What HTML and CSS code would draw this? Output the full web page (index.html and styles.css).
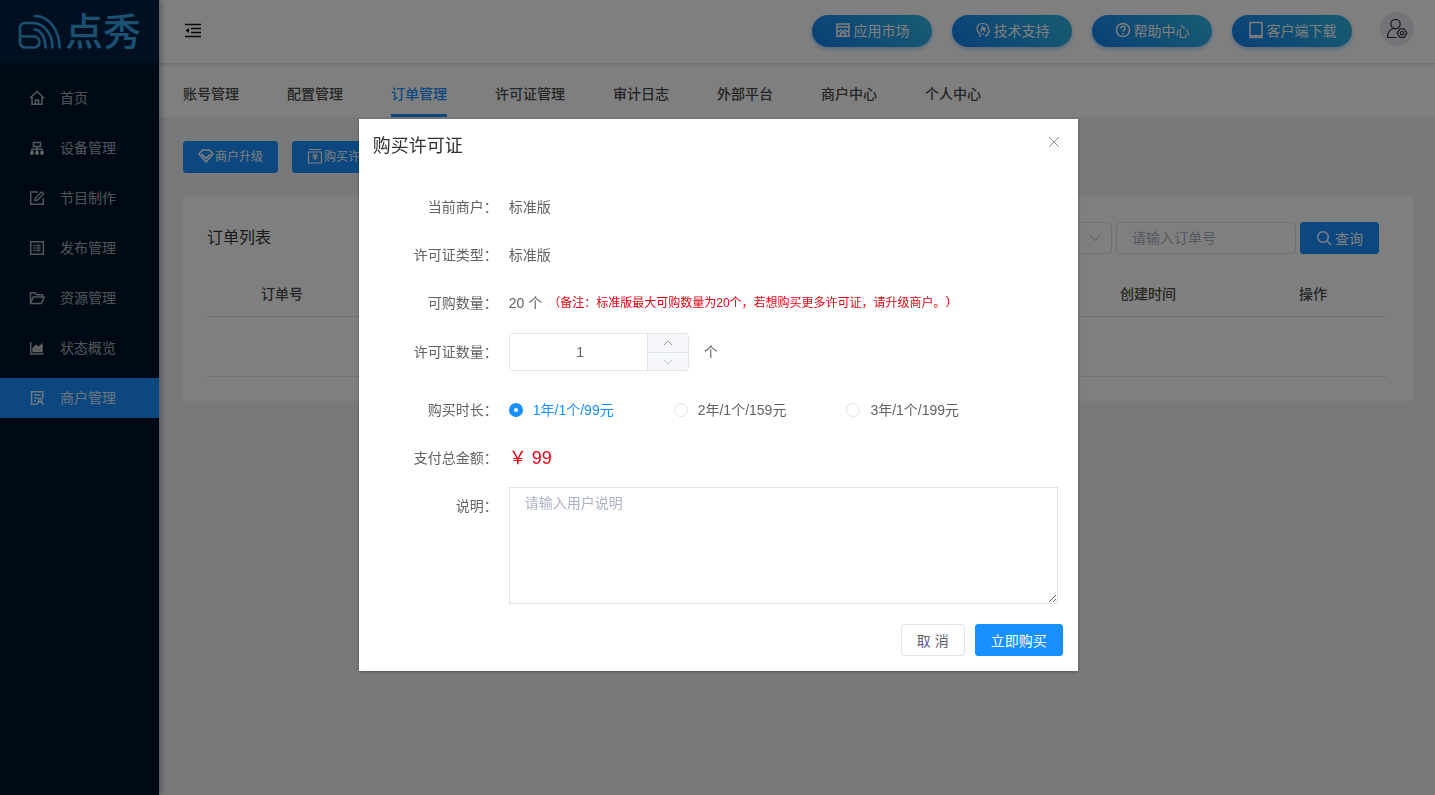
FILE: index.html
```html
<!DOCTYPE html>
<html lang="zh-CN">
<head>
<meta charset="utf-8">
<title>商户管理</title>
<link rel="stylesheet" href="styles.css">
</head>
<body>
<div class="app">
  <aside class="sidebar">
    <div class="logo">
      <svg class="logo-mark" viewBox="0 0 43 36" fill="none" stroke="currentColor" stroke-width="2.6" stroke-linecap="round">
        <path d="M4 22.500h12a5.500 5.500 0 0 1 0 11H7a5 5 0 0 1-5-5V14a5 5 0 0 1 5-5h8C26 9 34.500 20 34.500 33.500"/>
        <path d="M17 2C31 2 41.500 16 41.500 33.500"/>
        <path d="M16.500 15.500c6.500 0 11 8.500 11 18"/>
      </svg>
      <span>点秀</span>
    </div>
    <nav class="menu">
      <a class="menu-item" href="#"><svg class="icon" viewBox="0 0 16 16"><path d="M1 8 8 1.500 15 8M3 7v7.300h10V7M6.500 14v-4h3v4"/></svg>首页</a>
      <a class="menu-item" href="#"><svg class="icon" viewBox="0 0 16 16"><path d="M4.500 2.500h7v4h-7zM8 7v3M3 12V9.300h10V12M8 9v3"/><path class="solid" d="M2 12h2v2H2zM7 12h2v2H7zM12 12h2v2h-2z"/></svg>设备管理</a>
      <a class="menu-item" href="#"><svg class="icon" viewBox="0 0 16 16"><path d="M9 2H1.700v12.300h12.600V8M6 10.500l.5-2.500 6-6 2 2-6 6z"/></svg>节目制作</a>
      <a class="menu-item" href="#"><svg class="icon" viewBox="0 0 16 16"><path d="M1.700 1.700h12.600v12.600H1.700zM4.500 5.500h2M4.500 8h2M4.500 10.500h2M7.500 5.500h4M7.500 8h4M7.500 10.500h4"/></svg>发布管理</a>
      <a class="menu-item" href="#"><svg class="icon" viewBox="0 0 16 16"><path d="M1.500 13.500V2.700h4.300l1.700 2h6v2M1.500 13.500h11l2.500-6.500H4.200z"/></svg>资源管理</a>
      <a class="menu-item" href="#"><svg class="icon" viewBox="0 0 16 16"><path d="M1.700 2v12h13"/><path class="solid" d="M4 11.500V8.500l3-3 2.500 2L13 4.500v7z"/></svg>状态概览</a>
      <a class="menu-item active" href="#"><svg class="icon" viewBox="0 0 16 16"><path d="M6.500 14.300h-4V1.700h11.300V8M5 5h6.500M5 8h3.500M5 11h2"/><circle cx="11" cy="10" r="1.700"/><path d="M7.800 15c.3-2 1.500-3.200 3.200-3.200s3 1.200 3.200 3.200"/></svg>商户管理</a>
    </nav>
  </aside>

  <div class="page">
    <header class="topbar">
      <button class="fold" type="button" aria-label="收起菜单">
        <svg viewBox="0 0 16 16" fill="none" stroke="currentColor" stroke-width="1.300"><path d="M0 1.500h16M6 5.500h10M6 9.500h10M0 13.500h16"/><path d="M4 5v5L.5 7.500z" fill="currentColor" stroke="none"/></svg>
      </button>
      <div class="actions">
        <button class="pill" type="button"><svg class="icon" viewBox="0 0 16 16"><path d="M2 2h12v12.300H2zM2 5h12M2 8c1 1.800 3 1.800 4 0 1 1.800 3 1.800 4 0 1 1.800 3 1.800 4 0M5.500 14v-3h5v3"/></svg>应用市场</button>
        <button class="pill" type="button"><svg class="icon thin" viewBox="0 0 16 16"><path d="M5 15v-3.500C0 8.500 1.500 1.500 7.500 1.500c5 0 6 3.500 6 5.500l1 3-1.500.5V13h-2v2M6 10l1.500-5.500L10 10M7 7.500h2.500M10 5v3M8 13v-2"/></svg>技术支持</button>
        <button class="pill" type="button"><svg class="icon" viewBox="0 0 16 16"><circle cx="8" cy="8" r="6.600"/><path d="M5.800 6.500c0-3 4.500-3 4.500-.3C10.300 8 8 8 8 9.700M8 11v1.400"/></svg>帮助中心</button>
        <button class="pill" type="button"><svg class="icon device" viewBox="0 0 16 18"><path d="M2 1.500h12v15H2zM2 14.800h12M7 15.500h2"/></svg>客户端下载</button>
        <button class="avatar" type="button" aria-label="用户设置">
          <svg viewBox="0 0 22 22" fill="none" stroke="currentColor" stroke-width="1.200"><circle cx="9.500" cy="6" r="4.700"/><path d="M10.500 19.500H1.500c0-5 2-8 6-9M13.800 10.900h4.400l2.600 4.200-2.600 4.300h-4.400l-2.600-4.300z"/><circle cx="16" cy="15.200" r="1.700"/></svg>
        </button>
      </div>
    </header>

    <nav class="tabs">
      <a href="#">账号管理</a>
      <a href="#">配置管理</a>
      <a class="current" href="#">订单管理</a>
      <a href="#">许可证管理</a>
      <a href="#">审计日志</a>
      <a href="#">外部平台</a>
      <a href="#">商户中心</a>
      <a href="#">个人中心</a>
    </nav>

    <main class="content">
      <div class="toolbar">
        <button class="btn primary small" type="button"><svg class="icon" viewBox="0 0 16 16"><path d="M4.500 2h7L15 6l-7 8-7-8zM3.500 6 8 10.500 12.500 6"/></svg>商户升级</button>
        <button class="btn primary small" type="button"><svg class="icon thin" viewBox="0 0 16 16"><path d="M2 1.500h12M1.500 4v11h13V4zM6 5.500 8 8l2-2.500M5.500 8h5M5.500 10h5M8 8v4.500"/></svg>购买许可证</button>
      </div>
      <section class="panel">
        <div class="panel-head">
          <h2>订单列表</h2>
          <div class="filters">
            <span class="select-wrap">
              <select class="field" aria-label="状态"><option></option></select>
              <svg viewBox="0 0 12 12"><path d="M1 3.500 6 8.500l5-5"/></svg>
            </span>
            <input class="field order-no" type="text" placeholder="请输入订单号" aria-label="订单号">
            <button class="btn primary search" type="button"><svg class="icon" viewBox="0 0 16 16"><circle cx="7" cy="7" r="5.300"/><path d="m11 11 4 4"/></svg>查询</button>
          </div>
        </div>
        <table class="orders">
          <thead><tr><th class="col-no">订单号</th><th></th><th class="col-time">创建时间</th><th class="col-op">操作</th></tr></thead>
          <tbody><tr><td colspan="4"></td></tr></tbody>
        </table>
      </section>
    </main>
  </div>
</div>

<div class="overlay">
  <form class="dialog" role="dialog" aria-labelledby="dialog-title">
    <div class="dialog-head">
      <h1 id="dialog-title">购买许可证</h1>
      <button class="close" type="button" aria-label="关闭"><svg viewBox="0 0 12 12"><path d="m1 1 10 10M11 1 1 11"/></svg></button>
    </div>
    <div class="rows">
      <div class="row"><span class="label">当前商户：</span><span>标准版</span></div>
      <div class="row"><span class="label">许可证类型：</span><span>标准版</span></div>
      <div class="row"><span class="label">可购数量：</span><span>20 个</span><span class="note">（备注：标准版最大可购数量为20个，若想购买更多许可证，请升级商户。）</span></div>
      <div class="row tall">
        <label class="label" for="count">许可证数量：</label>
        <span class="stepper">
          <input id="count" type="text" value="1">
          <span class="steps">
            <button type="button" aria-label="增加"><svg viewBox="0 0 12 12"><path d="m2 8 4-4 4 4"/></svg></button>
            <button type="button" aria-label="减少" disabled><svg viewBox="0 0 12 12"><path d="m2 4 4 4 4-4"/></svg></button>
          </span>
        </span>
        <span class="unit">个</span>
      </div>
      <div class="row">
        <span class="label">购买时长：</span>
        <div class="radios">
          <label><input type="radio" name="term" checked><span>1年/1个/99元</span></label>
          <label><input type="radio" name="term"><span>2年/1个/159元</span></label>
          <label><input type="radio" name="term"><span>3年/1个/199元</span></label>
        </div>
      </div>
      <div class="row"><span class="label">支付总金额：</span><span class="price">￥ 99</span></div>
      <div class="row top">
        <label class="label" for="remark">说明：</label>
        <textarea id="remark" placeholder="请输入用户说明"></textarea>
      </div>
    </div>
    <div class="dialog-foot">
      <button class="btn" type="button">取 消</button>
      <button class="btn primary" type="submit">立即购买</button>
    </div>
  </form>
</div>
</body>
</html>
```
FILE: styles.css
```css
* { box-sizing: border-box; }
body, h1, h2 { margin: 0; }
body, button, input, select, textarea {
  font-family: "Liberation Sans", "Noto Sans CJK SC", sans-serif;
  font-size: 14px;
}
body {
  color: #606266;
  line-height: 20px;
  background: #f0f2f5;
  text-spacing-trim: space-all;
}
button { cursor: pointer; }
a { color: inherit; text-decoration: none; }
svg { flex: none; }

.icon {
  width: 16px;
  height: 16px;
  fill: none;
  stroke: currentColor;
  stroke-width: 1.5;
}
.icon .solid { fill: currentColor; }
.icon.thin { stroke-width: 1.2; }
.icon.device { height: 18px; }

.app { display: flex; min-height: 100vh; }

.sidebar {
  flex: none;
  width: 159px;
  background: #001529;
  box-shadow: 2px 0 6px rgba(0, 21, 41, .35);
  z-index: 2;
}
.logo {
  display: flex;
  align-items: center;
  gap: 4px;
  height: 63px;
  padding-left: 18px;
  background: #002140;
  color: #36a0e0;
  font-size: 38px;
  font-weight: 500;
  line-height: 40px;
}
.logo-mark { width: 43px; height: 36px; }
.menu { display: flex; flex-direction: column; gap: 10px; padding-top: 15px; }
.menu-item {
  display: flex;
  align-items: center;
  gap: 15px;
  height: 40px;
  padding-left: 29px;
  color: rgba(255, 255, 255, .65);
}
.menu-item.active { background: #1890ff; color: rgba(255, 255, 255, .85); }

.page { flex: 1; min-width: 0; }
.topbar {
  display: flex;
  align-items: center;
  justify-content: space-between;
  height: 64px;
  padding: 0 21px 2px 26px;
  background: #fff;
  border-bottom: 1px solid #e8e8e8;
  box-shadow: 0 1px 4px rgba(0, 21, 41, .12);
  position: relative;
}
.fold, .avatar, .close { padding: 0; border: 0; background: none; color: #333; }
.fold { color: #111; }
.fold svg { display: block; width: 16px; height: 16px; }
.actions { display: flex; align-items: center; gap: 20px; }
.pill {
  display: flex;
  align-items: center;
  justify-content: center;
  gap: 3px;
  width: 120px;
  height: 32px;
  padding: 0 0 2px;
  border: 0;
  border-radius: 16px;
  background: linear-gradient(45deg, #1480f0, #30b8e0);
  box-shadow: 0 2px 4px rgba(24, 144, 255, .4);
  color: #fff;
}
.avatar {
  display: grid;
  place-items: center;
  width: 34px;
  height: 34px;
  margin: 0 0 4px 8px;
  border-radius: 50%;
  background: #e6e8f0;
}
.avatar svg { width: 22px; height: 22px; }

.tabs {
  display: flex;
  gap: 48px;
  padding: 0 24px;
  background: #fff;
  color: #4c4c4e;
  font-weight: 500;
}
.tabs a { height: 53px; line-height: 60px; }
.tabs .current { color: #1890ff; border-bottom: 3px solid #1890ff; }

.content { padding: 24px 22px 24px 24px; }
.toolbar { display: flex; gap: 14px; margin-bottom: 24px; }
.btn {
  display: inline-flex;
  align-items: center;
  justify-content: center;
  gap: 4px;
  height: 32px;
  padding: 0 15px;
  border: 1px solid #dfe4e8;
  border-radius: 3px;
  background: #fff;
  color: #606266;
}
.btn.primary { border-color: #1890ff; background: #1890ff; color: #fff; }
.btn.small { gap: 1px; padding: 0 14px 3px; font-size: 12px; }
.btn.search { gap: 3px; padding: 0 15px; }

.panel { padding: 25px 26px 24px 24px; background: #fff; }
.panel-head {
  display: flex;
  align-items: center;
  justify-content: space-between;
  padding-right: 8px;
}
.panel-head h2 { color: #333; font-size: 16px; font-weight: 400; }
.filters { display: flex; align-items: center; gap: 4px; }
.field {
  width: 180px;
  height: 32px;
  padding: 0 15px;
  border: 1px solid #dfe4e8;
  border-radius: 4px;
  background: #fff;
  appearance: none;
}
.field::placeholder, .dialog textarea::placeholder { color: #aab2c4; }
.select-wrap { display: grid; align-items: center; justify-items: end; }
.select-wrap > * { grid-area: 1 / 1; }
.select-wrap svg {
  width: 12px;
  height: 12px;
  margin-right: 11px;
  fill: none;
  stroke: #aab2c4;
  z-index: 1;
}
.orders { width: 100%; margin-top: 15px; border-collapse: collapse; table-layout: fixed; }
.orders th {
  height: 47px;
  padding: 4px 0 0;
  border-bottom: 1px solid #e4e7ed;
  color: #4c4c4e;
  font-weight: 500;
}
.orders td { height: 60px; border-bottom: 1px solid #e4e7ed; }
.col-no { width: 150px; }
.col-time { width: 182px; }
.col-op { width: 148px; }

.overlay { position: fixed; inset: 0; z-index: 10; background: rgba(0, 0, 0, .5); }
.dialog {
  width: 719px;
  max-width: 75%;
  margin: 15vh 0 0 25%;
  background: #fff;
  box-shadow: 0 1px 3px rgba(0, 0, 0, .3);
}
.dialog-head {
  display: flex;
  justify-content: space-between;
  align-items: center;
  padding: 15px 18px 0 14px;
}
.dialog-head h1 { color: #303133; font-size: 18px; font-weight: 400; line-height: 24px; }
.close svg { display: block; width: 12px; height: 12px; margin-bottom: 8px; }
.close path, .steps path { fill: none; stroke: #909399; }
.rows { padding: 25px 20px 0 0; }
.row { display: flex; align-items: center; min-height: 48px; }
.row.tall { min-height: 50px; margin-bottom: 9px; }
.row.top { align-items: flex-start; padding-top: 5px; }
.row.top .label { padding-top: 9px; }
.label { flex: none; width: 139px; margin-right: 11px; text-align: right; }
.note { margin-left: 6px; color: #e60012; font-size: 12px; }
.stepper {
  display: flex;
  width: 180px;
  height: 38px;
  border: 1px solid #dfe4e8;
  border-radius: 4px;
  overflow: hidden;
}
.stepper input {
  flex: 1;
  min-width: 0;
  padding: 0 0 0 4px;
  border: 0;
  color: #606266;
  text-align: center;
}
.steps { display: grid; grid-template-rows: 1fr 1fr; width: 41px; }
.steps button {
  display: grid;
  place-items: center;
  padding: 0;
  border: 0;
  border-left: 1px solid #dfe4e8;
  background: #f5f7fa;
}
.steps button + button { border-top: 1px solid #dfe4e8; }
.steps svg { width: 12px; height: 12px; }
.steps button:disabled path { stroke: #c0c4cc; }
.unit { margin-left: 15px; }
.radios { display: flex; gap: 60px; }
.radios label { display: flex; align-items: center; gap: 10px; }
.radios input {
  appearance: none;
  width: 14px;
  height: 14px;
  margin: 0;
  border: 1px solid #dfe4e8;
  border-radius: 50%;
  background: #fff;
}
.radios input:checked { border: 5px solid #1890ff; }
.radios input:checked + span { color: #1890ff; }
.price { color: #e60012; font-size: 18px; }
.dialog textarea {
  display: block;
  flex: 1;
  height: 117px;
  padding: 5px 15px;
  border: 1px solid #dfe4e8;
  line-height: 20px;
  resize: vertical;
}
.dialog-foot { display: flex; justify-content: flex-end; gap: 10px; padding: 20px 15px 15px; }
```
